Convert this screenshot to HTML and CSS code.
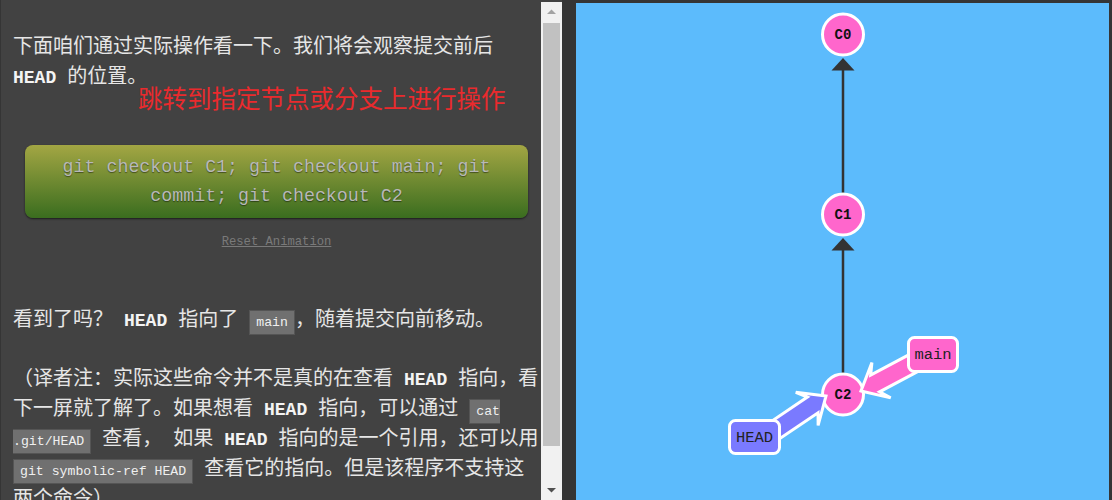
FILE: index.html
```html
<!DOCTYPE html>
<html lang="zh-CN">
<head>
<meta charset="utf-8">
<title>HEAD</title>
<link rel="stylesheet" href="styles.css">
</head>
<body>
<div class="app">
  <div class="left">
    <div class="content">
      <p class="para p1">下面咱们通过实际操作看一下。我们将会观察提交前后 <b>HEAD</b> 的位置。</p>
      <div class="annot">跳转到指定节点或分支上进行操作</div>
      <div class="cmd">git checkout C1; git checkout main; git commit; git checkout C2</div>
      <div class="reset"><a class="reset-link">Reset Animation</a></div>
      <p class="para p2">看到了吗？ <b>HEAD</b> 指向了 <code>main</code>，随着提交向前移动。</p>
      <p class="para p3">（译者注：实际这些命令并不是真的在查看 <b>HEAD</b> 指向，看下一屏就了解了。如果想看 <b>HEAD</b> 指向，可以通过 <code>cat .git/HEAD</code> 查看， 如果 <b>HEAD</b> 指向的是一个引用，还可以用 <code>git symbolic-ref HEAD</code> 查看它的指向。但是该程序不支持这两个命令）</p>
    </div>
    <div class="scrollbar">
      <div class="sb-btn">
        <svg width="21" height="21" viewBox="0 0 21 21"><polygon points="6,12 10.5,7.5 15,12" fill="#a3a3a3"/></svg>
      </div>
      <div class="sb-track"><div class="sb-thumb"></div></div>
      <div class="sb-btn">
        <svg width="21" height="21" viewBox="0 0 21 21"><polygon points="6,9 15,9 10.5,13.5" fill="#505050"/></svg>
      </div>
    </div>
  </div>
  <div class="right">
    <div class="canvas">
      <svg class="graph" width="533" height="497" viewBox="0 0 533 497">
        <line x1="267" y1="192" x2="267" y2="66" stroke="#333" stroke-width="2.5"/>
        <polygon points="267,55 255.5,67.5 278.5,67.5" fill="#333"/>
        <line x1="267" y1="372" x2="267" y2="246" stroke="#333" stroke-width="2.5"/>
        <polygon points="267,235 255.5,247.5 278.5,247.5" fill="#333"/>

        <circle cx="267" cy="31.5" r="20.5" fill="#ff66cc" stroke="#fff" stroke-width="3"/>
        <text class="node-label" x="267" y="32">C0</text>
        <circle cx="267" cy="211.5" r="20.5" fill="#ff66cc" stroke="#fff" stroke-width="3"/>
        <text class="node-label" x="267" y="212">C1</text>
        <circle cx="267" cy="391.5" r="20.5" fill="#ff66cc" stroke="#fff" stroke-width="3"/>
        <text class="node-label" x="267" y="392">C2</text>

        <g transform="translate(285,388) rotate(152)">
          <polygon points="0,0 -23,-20 -16,-9.5 -66,-9.5 -66,9.5 -16,9.5 -23,20" fill="#ff66cc" stroke="#fff" stroke-width="3" stroke-linejoin="miter"/>
        </g>
        <g transform="translate(250,393) rotate(-34)">
          <polygon points="0,0 -23,-20 -16,-9.5 -66,-9.5 -66,9.5 -16,9.5 -23,20" fill="#7a7aff" stroke="#fff" stroke-width="3" stroke-linejoin="miter"/>
        </g>

        <rect x="332.5" y="334.5" width="49" height="34" rx="6" fill="#ff66cc" stroke="#fff" stroke-width="3"/>
        <text class="ref-label" x="357" y="352">main</text>
        <rect x="153.5" y="417.5" width="50" height="33" rx="6" fill="#7a7aff" stroke="#fff" stroke-width="3"/>
        <text class="ref-label" x="178.5" y="434.5">HEAD</text>
      </svg>
    </div>
  </div>
</div>
</body>
</html>
```
FILE: styles.css
```css
html, body {
  margin: 0;
  padding: 0;
}
body {
  background: #353535;
  width: 1112px;
  height: 500px;
  overflow: hidden;
}
.app {
  display: flex;
  height: 500px;
  background: #353535;
}
.left {
  display: flex;
  width: 561px;
  margin-left: 1px;
  background: #424242;
  height: 500px;
}
.content {
  position: relative;
  box-sizing: border-box;
  width: 540px;
  padding: 33px 0 0 12px;
  overflow: hidden;
  font-family: "Liberation Mono", "Noto Sans CJK SC", monospace;
  font-size: 20px;
  line-height: 30px;
  color: #e6e6e6;
}
.para {
  margin: 0;
  word-spacing: -1px;
}
.para b {
  font-size: 18px;
  line-height: 1;
  color: #f4f4f4;
  font-weight: bold;
}
.para code {
  font-family: "Liberation Mono", monospace;
  font-size: 13.2px;
  line-height: 16px;
  word-spacing: 0;
  color: #efefef;
  background: #707070;
  border: 1px solid #555;
  padding: 4px 6px;
}
.p2 {
  margin-top: 56px;
}
.p3 {
  margin-top: 29px;
}
.annot {
  position: absolute;
  left: 137px;
  top: 85px;
  font-family: "Noto Sans CJK SC", sans-serif;
  font-size: 24.5px;
  line-height: 25px;
  color: #ea2a2d;
  white-space: nowrap;
}
.cmd {
  margin: 52px 0 0 12px;
  width: 503px;
  box-sizing: border-box;
  padding: 8px 20px 7px;
  border-radius: 8px;
  background: linear-gradient(#a3a643, #3a6d1f);
  box-shadow: 0 1px 2px rgba(0, 0, 0, 0.6);
  text-align: center;
  font-family: "Liberation Mono", monospace;
  font-size: 18.3px;
  line-height: 29px;
  color: #b8b8b8;
  text-shadow: 0 1px 1px rgba(0, 0, 0, 0.45);
}
.reset {
  margin-top: 14px;
  width: 527px;
  text-align: center;
  line-height: 16px;
}
.reset-link {
  font-family: "Liberation Mono", monospace;
  font-size: 12.2px;
  color: #7a7a7a;
  text-decoration: underline;
}
.scrollbar {
  width: 21px;
  margin-top: 2px;
  background: #f1f1f1;
  display: flex;
  flex-direction: column;
}
.sb-btn {
  height: 21px;
  flex: none;
}
.sb-btn svg {
  display: block;
}
.sb-track {
  flex: 1;
}
.sb-thumb {
  margin: 0 2px;
  height: 423px;
  background: #c1c1c1;
}
.right {
  flex: 1;
  padding: 3px 3px 0 14px;
}
.canvas {
  background: #5cbbfc;
  height: 497px;
  overflow: hidden;
}
.graph {
  display: block;
}
.node-label {
  font-family: "Liberation Mono", monospace;
  font-weight: bold;
  font-size: 14px;
  fill: #111;
  text-anchor: middle;
  dominant-baseline: central;
}
.ref-label {
  font-family: "Liberation Mono", monospace;
  font-size: 15.5px;
  fill: #222;
  text-anchor: middle;
  dominant-baseline: central;
}
```
